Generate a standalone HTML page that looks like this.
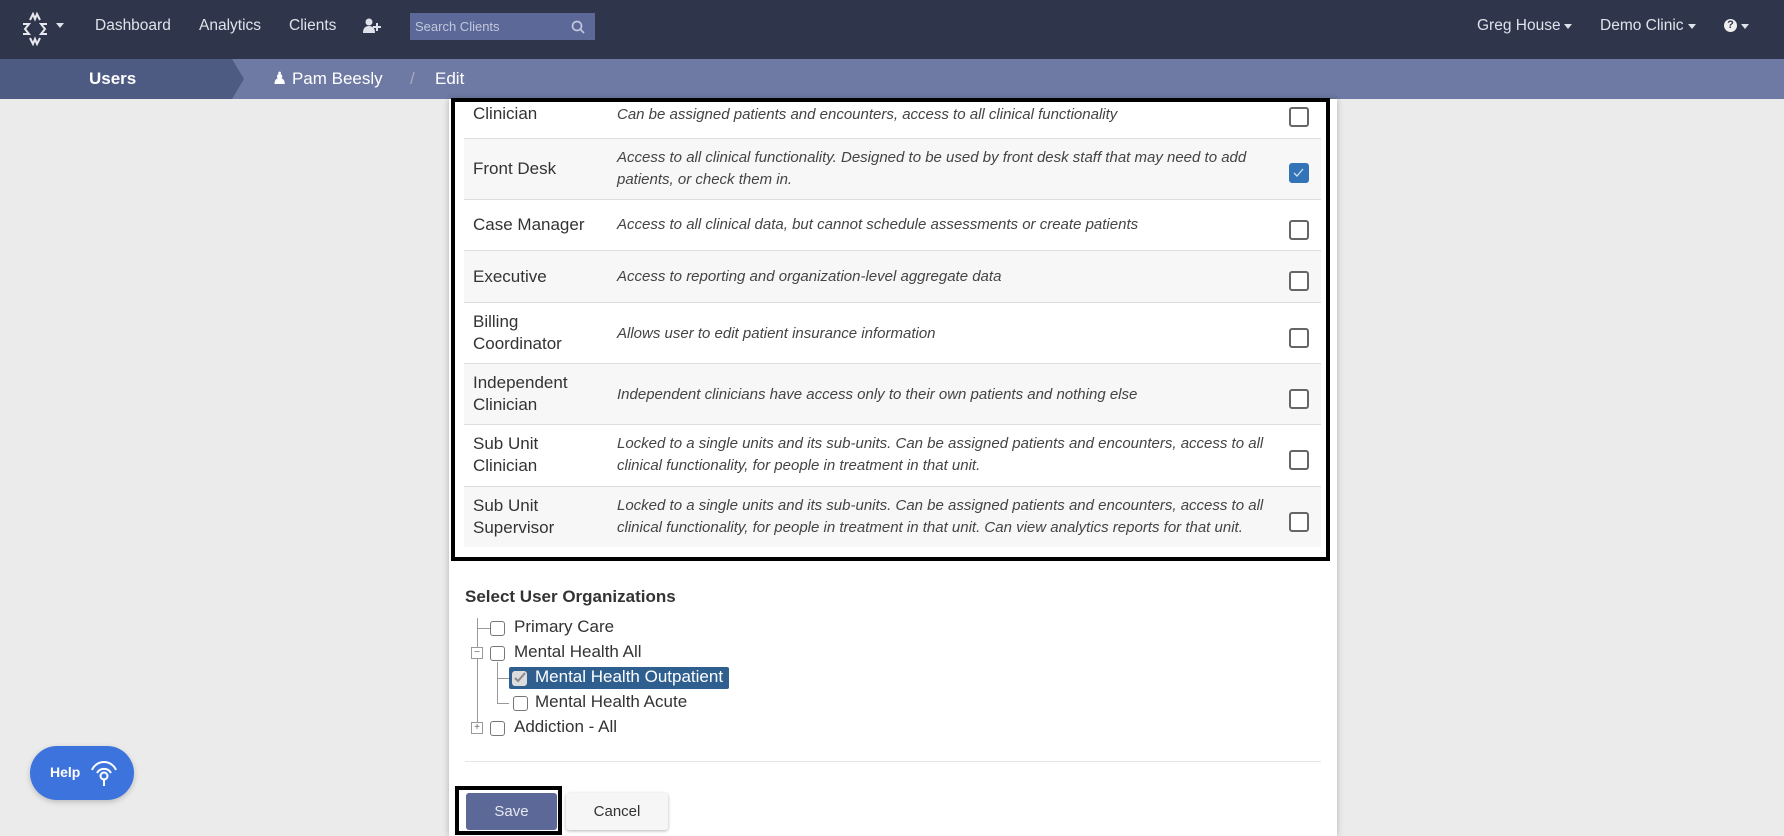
<!DOCTYPE html>
<html><head><meta charset="utf-8"><style>
*{box-sizing:border-box;margin:0;padding:0}
body{width:1784px;height:836px;overflow:hidden;background:#ebebeb;font-family:"Liberation Sans",sans-serif;position:relative}
.nav{position:absolute;left:0;top:0;width:1784px;height:59px;background:#2f364b;color:#dfe2ea;font-size:15.5px}
.nav span{position:absolute;top:17px}
.crumb{position:absolute;left:0;top:59px;width:1784px;height:40px;background:#6e7aa4;color:#fff;font-size:17px}
.crumb .u{position:absolute;left:0;top:0;width:232px;height:40px;background:#4d5a82}
.crumb .tip{position:absolute;left:232px;top:0;width:0;height:0;border-top:20px solid transparent;border-bottom:20px solid transparent;border-left:12px solid #4d5a82}
.panel{position:absolute;left:449px;top:99px;width:888px;height:737px;background:#fff;box-shadow:0 0 6px rgba(0,0,0,.25)}
.box{position:absolute;left:451px;top:98px;width:879px;height:463px;border:4px solid #000}
.row{position:absolute;left:464px;width:857px;border-top:1px solid #ddd;font-size:17px;color:#333}
.row.g{background:#f7f7f7}
.row .l{position:absolute;left:9px;line-height:22px}
.row .d{position:absolute;left:153px;width:650px;font-style:italic;font-size:15px;color:#444;line-height:22px}
.cb{position:absolute;left:825px;width:20px;height:20px;border:2.5px solid #666;border-radius:3px;background:#fff}
.cb.on{background:#3373b7;border-color:#3373b7}
.t{position:absolute;font-size:17px;color:#333}
.sc{position:absolute;width:15px;height:15px;border:1.5px solid #777;border-radius:3px;background:#fff}
.ln{position:absolute;background:#999}
</style></head><body>
<div class="nav">
<svg style="position:absolute;left:20px;top:12px" width="30" height="34" viewBox="0 0 30 34" fill="none" stroke="#e8e8ee" stroke-width="2"><path d="M10 8 L13 2 L15 7 L17 2 L20 8"/><path d="M3 12 L9 12 L5 17 L9 22 L3 22"/><path d="M27 12 L21 12 L25 17 L21 22 L27 22"/><path d="M10 26 L13 32 L15 27 L17 32 L20 26"/></svg>
<svg style="position:absolute;left:56px;top:23px" width="8" height="5"><path d="M0 0H8L4 5Z" fill="#dfe2ea"/></svg>
<span style="left:95px">Dashboard</span><span style="left:199px">Analytics</span><span style="left:289px">Clients</span>
<svg style="position:absolute;left:363px;top:18px" width="18" height="16" viewBox="0 0 18 16" fill="#dfe2ea"><circle cx="6" cy="4" r="3.5"/><path d="M0 15 Q0 8 6 8 Q12 8 12 15Z"/><path d="M13 5h2v3h3v2h-3v3h-2v-3h-3v-2h3z"/></svg>
<div style="position:absolute;left:410px;top:13px;width:185px;height:27px;background:#5b6898"></div>
<span style="left:415px;top:19px;font-size:13px;color:#c3c8dc">Search Clients</span>
<svg style="position:absolute;left:571px;top:20px" width="14" height="14" fill="none" stroke="#c3c8dc" stroke-width="1.7"><circle cx="6" cy="6" r="4.5"/><path d="M9.5 9.5L13 13"/></svg>
<span style="left:1477px">Greg House</span><svg style="position:absolute;left:1564px;top:24px" width="8" height="5"><path d="M0 0H8L4 5Z" fill="#dfe2ea"/></svg>
<span style="left:1600px">Demo Clinic</span><svg style="position:absolute;left:1688px;top:24px" width="8" height="5"><path d="M0 0H8L4 5Z" fill="#dfe2ea"/></svg>
<div style="position:absolute;left:1724px;top:19px;width:13px;height:13px;border-radius:50%;background:#eee;color:#2f364b;font-size:11px;font-weight:bold;text-align:center;line-height:13px">?</div>
<svg style="position:absolute;left:1741px;top:24px" width="8" height="5"><path d="M0 0H8L4 5Z" fill="#dfe2ea"/></svg>
</div>
<div class="crumb"><div class="u"></div><div class="tip"></div>
<span style="position:absolute;left:89px;top:10px;font-weight:bold">Users</span>
<span style="position:absolute;left:272px;top:10px">&#9823; Pam Beesly</span>
<span style="position:absolute;left:410px;top:10px;color:#aab">/</span>
<span style="position:absolute;left:435px;top:10px">Edit</span></div>
<div class="panel"></div>
<div class="row" style="top:99px;height:39px;border-top:none"><span class="l" style="top:4px">Clinician</span><span class="d" style="top:5px">Can be assigned patients and encounters, access to all clinical functionality</span><span class="cb" style="top:8px"></span></div>
<div class="row g" style="top:138px;height:61px"><span class="l" style="top:19px">Front Desk</span><span class="d" style="top:8px">Access to all clinical functionality. Designed to be used by front desk staff that may need to add patients, or check them in.</span><span class="cb on" style="top:24px"><svg width="15" height="15" style="position:absolute;left:0;top:0"><path d="M3 8l3 3 6-7" stroke="#cfe0f3" stroke-width="1.3" fill="none"/></svg></span></div>
<div class="row" style="top:199px;height:51px"><span class="l" style="top:14px">Case Manager</span><span class="d" style="top:14px">Access to all clinical data, but cannot schedule assessments or create patients</span><span class="cb" style="top:20px"></span></div>
<div class="row g" style="top:250px;height:52px"><span class="l" style="top:15px">Executive</span><span class="d" style="top:15px">Access to reporting and organization-level aggregate data</span><span class="cb" style="top:20px"></span></div>
<div class="row" style="top:302px;height:61px"><span class="l" style="top:8px">Billing<br>Coordinator</span><span class="d" style="top:20px">Allows user to edit patient insurance information</span><span class="cb" style="top:25px"></span></div>
<div class="row g" style="top:363px;height:61px"><span class="l" style="top:8px">Independent<br>Clinician</span><span class="d" style="top:20px">Independent clinicians have access only to their own patients and nothing else</span><span class="cb" style="top:25px"></span></div>
<div class="row" style="top:424px;height:62px"><span class="l" style="top:8px">Sub Unit<br>Clinician</span><span class="d" style="top:8px">Locked to a single units and its sub-units. Can be assigned patients and encounters, access to all clinical functionality, for people in treatment in that unit.</span><span class="cb" style="top:25px"></span></div>
<div class="row g" style="top:486px;height:61px"><span class="l" style="top:8px">Sub Unit<br>Supervisor</span><span class="d" style="top:8px">Locked to a single units and its sub-units. Can be assigned patients and encounters, access to all clinical functionality, for people in treatment in that unit. Can view analytics reports for that unit.</span><span class="cb" style="top:25px"></span></div>
<div class="box"></div>
<div class="t" style="left:465px;top:587px;font-weight:bold">Select User Organizations</div>
<div class="ln" style="left:477px;top:618px;width:1px;height:110px"></div>
<div class="ln" style="left:477px;top:628px;width:13px;height:1px"></div>
<div class="ln" style="left:497px;top:662px;width:1px;height:41px"></div>
<div class="ln" style="left:497px;top:678px;width:12px;height:1px"></div>
<div class="ln" style="left:497px;top:703px;width:12px;height:1px"></div>
<div class="sc" style="left:490px;top:621px"></div><div class="t" style="left:514px;top:617px">Primary Care</div>
<div style="position:absolute;left:471px;top:647px;width:12px;height:12px;border:1px solid #999;background:#fff;font-size:10px;line-height:9px;text-align:center;color:#666">−</div>
<div class="sc" style="left:490px;top:646px"></div><div class="t" style="left:514px;top:642px">Mental Health All</div>
<div style="position:absolute;left:509px;top:667px;width:220px;height:22px;background:#2f5f8f;border-radius:2px"></div>
<div class="sc" style="left:512px;top:671px;background:#ddd;border-color:#ddd"><svg width="13" height="13" style="position:absolute;left:0;top:-1px"><path d="M2 7l3 3 7-8" stroke="#888" stroke-width="2" fill="none"/></svg></div>
<div class="t" style="left:535px;top:667px;color:#fff">Mental Health Outpatient</div>
<div class="sc" style="left:513px;top:696px"></div><div class="t" style="left:535px;top:692px">Mental Health Acute</div>
<div style="position:absolute;left:471px;top:722px;width:12px;height:12px;border:1px solid #999;background:#fff;font-size:10px;line-height:10px;text-align:center;color:#666">+</div>
<div class="sc" style="left:490px;top:721px"></div><div class="t" style="left:514px;top:717px">Addiction - All</div>
<div style="position:absolute;left:465px;top:761px;width:856px;height:1px;background:#e5e5e5"></div>
<div style="position:absolute;left:455px;top:786px;width:107px;height:49px;border:4px solid #000"></div>
<div style="position:absolute;left:466px;top:793px;width:91px;height:37px;background:#5b6898;border-radius:3px;color:#e6e8f0;font-size:15px;text-align:center;line-height:37px">Save</div>
<div style="position:absolute;left:566px;top:793px;width:102px;height:37px;background:#f6f6f6;border-radius:3px;box-shadow:0 1px 3px rgba(0,0,0,.3);color:#333;font-size:15px;text-align:center;line-height:37px">Cancel</div>
<div style="position:absolute;left:30px;top:746px;width:104px;height:54px;border-radius:27px;background:#3d73dc;box-shadow:0 2px 6px rgba(0,0,0,.2)"></div>
<span style="position:absolute;left:50px;top:764px;color:#fff;font-weight:bold;font-size:14px">Help</span>
<svg style="position:absolute;left:89px;top:759px" width="30" height="28" fill="none" stroke="#fff" stroke-width="2"><path d="M3 11 A13 13 0 0 1 27 11"/><path d="M8 14 A8 8 0 0 1 22 14"/><circle cx="15" cy="17" r="3.5"/><path d="M15 20.5V27"/></svg>
</body></html>
